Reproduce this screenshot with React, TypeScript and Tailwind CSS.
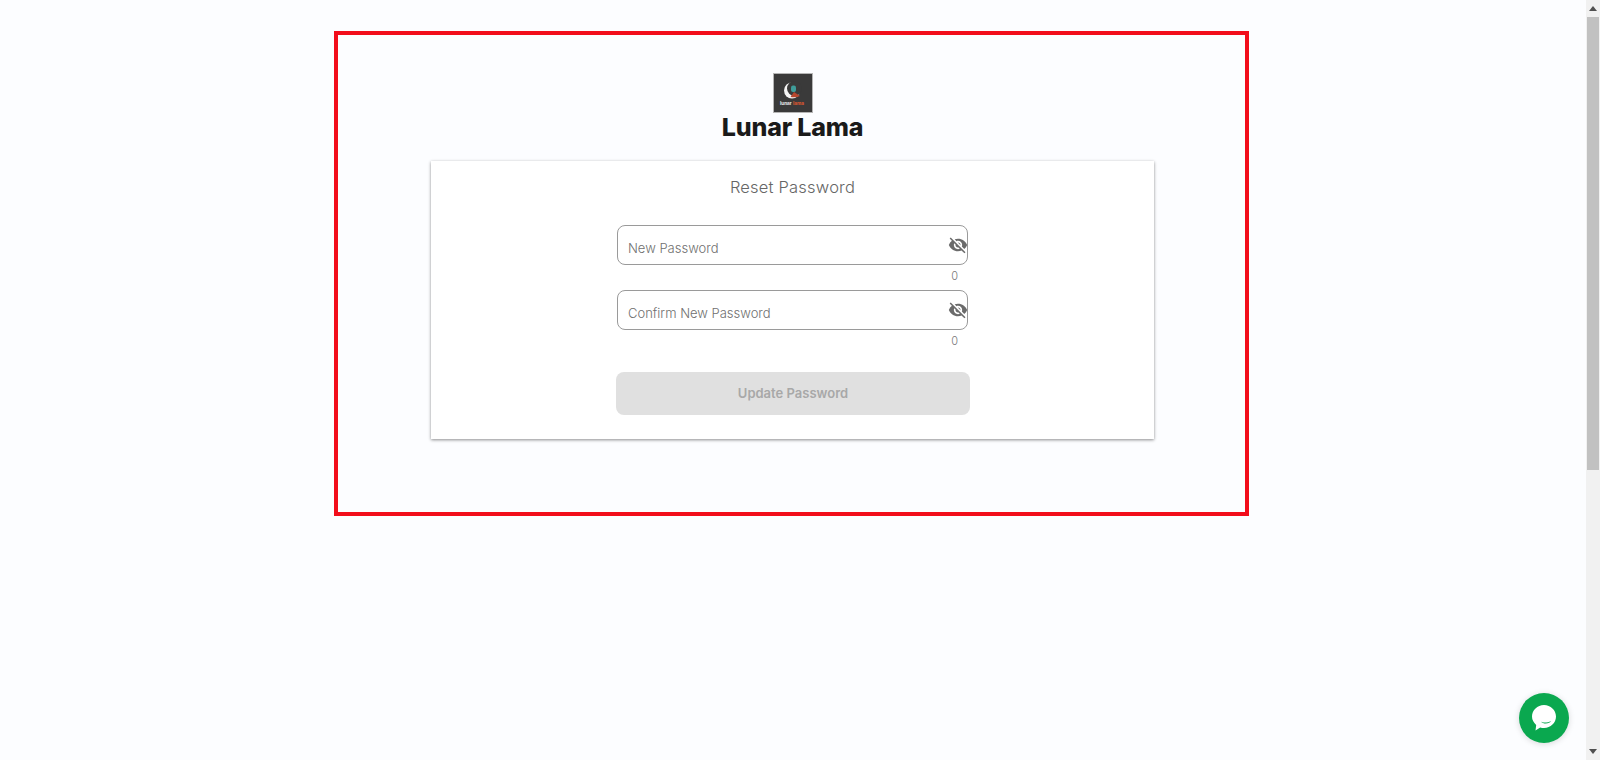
import { MdVisibilityOff } from "react-icons/md";

function Logo() {
  return (
    <svg width="40" height="40" viewBox="0 0 40 40" className="block">
      <rect x="0.5" y="0.5" width="39" height="39" fill="#3a3a3a" stroke="#b5b5b5" />
      <circle cx="19" cy="17.5" r="8" fill="#f4f4f4" />
      <circle cx="21.5" cy="15.5" r="7.5" fill="#3a3a3a" />
      <rect x="18" y="12.5" width="5" height="6.500" rx="2" fill="#3f9d9a" />
      <path d="M17.500 24 L21 19 L27 23 Q23 25 17.500 24 Z" fill="#b8472e" />
      <text x="7" y="31.500" fontSize="4.700" fontWeight="700" fill="#eeeeee" fontFamily="Inter, sans-serif">lunar</text>
      <text x="20" y="31.500" fontSize="4.700" fontWeight="700" fill="#e2592f" fontFamily="Inter, sans-serif">lama</text>
    </svg>
  );
}

function PasswordField({ label }: { label: string }) {
  return (
    <div className="w-[351px] flex flex-col">
      <div className="h-10 rounded-lg border border-[#9a9a9a] bg-white flex items-center justify-between">
        <span className="pl-2.5 pt-[7px] text-[13px] text-[#6f6f6f] font-['Inter',sans-serif] font-light">{label}</span>
        <MdVisibilityOff className="text-[20px] text-[#6b6b6b] -mr-px" />
      </div>
      <div className="h-[25px] pr-[10px] pt-[4px] text-right text-[11px] leading-[14px] text-[#777777] font-['Inter',sans-serif] font-light">0</div>
    </div>
  );
}

export default function App() {
  return (
    <div className="h-[760px] flex bg-[#fcfdff] overflow-hidden font-['Inter',sans-serif]">
      <main className="flex-1 min-w-0 pt-[31px] pl-[334px]">
        <div className="w-[915px] h-[485px] border-4 border-[#f20d1b] flex flex-col items-center pl-[2px] pt-[38px]">
          <Logo />
          <h1 className="text-[25px] leading-[28px] font-extrabold text-[#1a1a1a] tracking-[-0.2px]">Lunar Lama</h1>
          <section className="mt-[20px] w-[723px] h-[278px] bg-white shadow-[0_1px_3px_rgba(0,0,0,0.45)] flex flex-col items-center">
            <h2 className="mt-[15px] text-[16.5px] leading-[22px] text-[#666666] font-light tracking-[0.2px]">Reset Password</h2>
            <div className="mt-[27px] flex flex-col">
              <PasswordField label="New Password" />
              <PasswordField label="Confirm New Password" />
            </div>
            <button className="mt-[17px] ml-px w-[354px] h-[43px] rounded-lg bg-[#e0e0e0] text-[13px] font-semibold text-[#a8a8a8]">Update Password</button>
          </section>
        </div>
      </main>
      <aside className="w-[14px] shrink-0 bg-[#f1f1f1] flex flex-col items-center">
        <div className="h-[17px] flex items-center justify-center">
          <svg width="8" height="5" viewBox="0 0 8 5"><path d="M4 0 L8 5 L0 5 Z" fill="#505050" /></svg>
        </div>
        <div className="w-[12px] h-[453px] bg-[#c1c1c1]" />
        <div className="flex-1" />
        <div className="h-[17px] flex items-center justify-center">
          <svg width="8" height="5" viewBox="0 0 8 5"><path d="M0 0 L8 0 L4 5 Z" fill="#505050" /></svg>
        </div>
      </aside>
      <button className="absolute left-[1519px] top-[693px] w-[50px] h-[50px] rounded-full bg-[#0aa84f] shadow-[0_1px_6px_rgba(0,0,0,0.15)] flex items-center justify-center">
        <svg width="26" height="28" viewBox="0 0 26 28">
          <path d="M13 1 C19.6 1 25 6.2 25 12.6 C25 19 19.6 24 13 24 C11.6 24 10.4 23.8 9.2 23.4 L4.5 26.5 L5.2 21 C2.6 18.8 1 15.900 1 12.6 C1 6.2 6.400 1 13 1 Z" fill="#ffffff" />
          <path d="M10 17.5 C12 19 16.500 19 20 17 C19 20 12 20.500 10 17.5 Z" fill="#0aa84f" />
        </svg>
      </button>
    </div>
  );
}
